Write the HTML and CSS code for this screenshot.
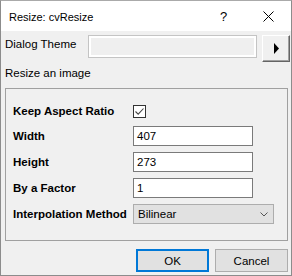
FILE: index.html
```html
<!DOCTYPE html>
<html>
<head>
<meta charset="utf-8">
<link rel="stylesheet" href="styles.css">
</head>
<body>
<div class="window">
  <div class="titlebar">
    <span class="title">Resize: cvResize</span>
    <span class="help">?</span>
    <svg class="close" width="11" height="11" viewBox="0 0 11 11"><path d="M0.5 0.5 L10.5 10.5 M10.5 0.5 L0.5 10.5" stroke="#000" stroke-width="1" fill="none"/></svg>
  </div>
  <div class="content">
    <div class="theme-row">
      <span class="theme-label">Dialog Theme</span>
      <div class="theme-box"></div>
      <div class="arrow-btn"><svg width="7" height="11" viewBox="0 0 7 11"><path d="M1 0 L6 5.5 L1 11 Z" fill="#000"/></svg></div>
    </div>
    <div class="section-label">Resize an image</div>
    <div class="group">
      <span class="lbl">Keep Aspect Ratio</span>
      <div class="check"><svg width="11" height="11" viewBox="0 0 11 11"><path d="M1.5 5.5 L4.2 8.2 L9.5 2.5" stroke="#444" stroke-width="1.1" fill="none"/></svg></div>
      <span class="lbl">Width</span>
      <div class="field">407</div>
      <span class="lbl">Height</span>
      <div class="field">273</div>
      <span class="lbl">By a Factor</span>
      <div class="field">1</div>
      <span class="lbl">Interpolation Method</span>
      <div class="select"><span>Bilinear</span><svg width="8" height="5" viewBox="0 0 8 5"><path d="M0.5 0.5 L4 4 L7.5 0.5" stroke="#555" stroke-width="1" fill="none"/></svg></div>
    </div>
    <div class="buttons">
      <div class="btn ok">OK</div>
      <div class="btn">Cancel</div>
    </div>
  </div>
</div>
</body>
</html>
```
FILE: styles.css
```css
* { box-sizing: border-box; }
html, body { margin: 0; padding: 0; }
body {
  font-family: "Liberation Sans", Arial, sans-serif;
  font-size: 11px;
  color: #000;
  background: #fff;
}
.window {
  width: 292px;
  height: 276px;
  border: 1px solid #8c8c8c;
  border-top-color: #aaa;
  display: flex;
  flex-direction: column;
  background: #f0f0f0;
}
.titlebar {
  height: 30px;
  background: #fff;
  display: flex;
  align-items: center;
  position: relative;
}
.title {
  margin-left: 8px;
  margin-top: 1px;
}
.help {
  position: absolute;
  left: 219px;
  top: 8px;
  font-size: 13px;
}
.close {
  position: absolute;
  left: 262px;
  top: 10px;
}
.content {
  flex: 1;
  padding: 4px 0 0 4px;
  display: flex;
  flex-direction: column;
}
.theme-row {
  display: flex;
  align-items: flex-start;
  height: 27px;
}
.theme-label {
  width: 83px;
  line-height: 16px;
  margin-top: 1px;
  font-size: 11.5px;
}
.theme-box {
  width: 169px;
  height: 23px;
  border: 1px solid #c4c4c4;
  box-shadow: inset 0 0 0 2px #fff;
  background: #efefef;
}
.arrow-btn {
  margin-left: 5px;
  width: 28px;
  height: 27px;
  background: #f0f0f0;
  border-top: 1px solid #fff;
  border-left: 1px solid #fff;
  border-right: 1px solid #646464;
  border-bottom: 1px solid #646464;
  box-shadow: inset -1px -1px 0 #a0a0a0;
  display: flex;
  align-items: center;
  justify-content: center;
}
.section-label {
  margin-top: 3px;
  line-height: 16px;
  height: 16px;
  font-size: 11.5px;
}
.group {
  margin-top: 7px;
  width: 283px;
  border: 1px solid #a0a0a0;
  padding: 13px 0 16px 7px;
  display: grid;
  grid-template-columns: 120px auto;
  grid-template-rows: 18px 20px 20px 20px 20px;
  row-gap: 6px;
  align-items: center;
  justify-items: start;
}
.lbl {
  font-weight: bold;
  font-size: 11.5px;
  line-height: 16px;
}
.check {
  width: 13px;
  height: 13px;
  border: 1px solid #333;
  background: #fff;
  display: flex;
  align-items: center;
  justify-content: center;
}
.field {
  width: 120px;
  height: 20px;
  border: 1px solid #7a7a7a;
  background: #fff;
  padding-left: 3px;
  line-height: 18px;
  font-size: 11.5px;
}
.select {
  width: 141px;
  height: 20px;
  border: 1px solid #adadad;
  background: #e1e1e1;
  display: flex;
  align-items: center;
  justify-content: space-between;
  padding: 0 5px 0 4px;
  font-size: 11.5px;
}
.buttons {
  margin-top: 8px;
  display: flex;
  justify-content: flex-end;
  gap: 6px;
  padding-right: 3px;
}
.btn {
  width: 73px;
  height: 23px;
  border: 1px solid #adadad;
  background: #e1e1e1;
  display: flex;
  align-items: center;
  justify-content: center;
  font-size: 11.5px;
}
.btn.ok {
  border: 2px solid #0078d7;
}
```
